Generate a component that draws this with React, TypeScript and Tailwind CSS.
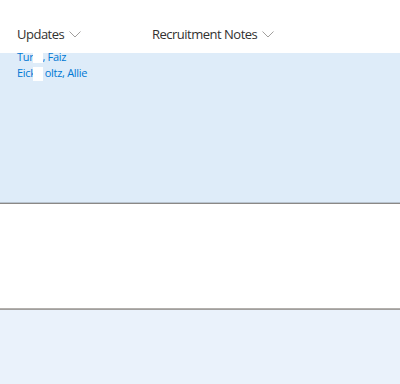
const COLUMNS = [
  { name: "Updates", width: "w-[135px]" },
  { name: "Recruitment Notes", width: "w-[200px]" },
]

function Chevron() {
  return (
    <svg width="12" height="7" viewBox="0 0 12 7" fill="none" className="text-[#a19f9d]">
      <path d="M0.5 0.5L6 6L11.5 0.5" stroke="currentColor" strokeWidth="1" />
    </svg>
  )
}

export default function App() {
  return (
    <div className="w-[400px] h-[384px] overflow-hidden bg-white text-[#323130]" style={{ fontFamily: '"Segoe UI", "Open Sans", sans-serif' }}>
      {/* Header */}
      <div className="h-[53px] flex items-start pt-[24px] pl-[17px]">
        {COLUMNS.map((c) => (
          <div key={c.name} className={`${c.width} flex items-center gap-[5px] text-[13px] leading-[20px] tracking-[-0.5px]`}>
            <span>{c.name}</span>
            <Chevron />
          </div>
        ))}
      </div>

      {/* Selected row */}
      <div className="h-[150px] flex flex-col bg-[#deecf9] border-b border-[#b9c4cf] pl-[17px]">
        <div className="text-[11px] leading-[16px] tracking-[-0.3px] text-[#0078d4] -mt-[4px]">
          <div className="relative w-fit">
            Tur<span className="inline-block w-[9px]" />, Faiz
            <span className="absolute left-[16px] top-[4px] w-[10px] h-[10px] bg-white" />
          </div>
          <div className="relative w-fit">
            Eick<span className="inline-block w-[9px]" />oltz, Allie
            <span className="absolute left-[16px] top-[2px] w-[10px] h-[14px] bg-white" />
          </div>
        </div>
      </div>

      {/* Empty row */}
      <div className="h-[106px] bg-white border-t border-[#8a8886] border-b border-b-[#b3b0ad]" />

      {/* Next row */}
      <div className="h-[80px] bg-[#eaf2fb] border-t border-[#a19f9d]" />
    </div>
  )
}
